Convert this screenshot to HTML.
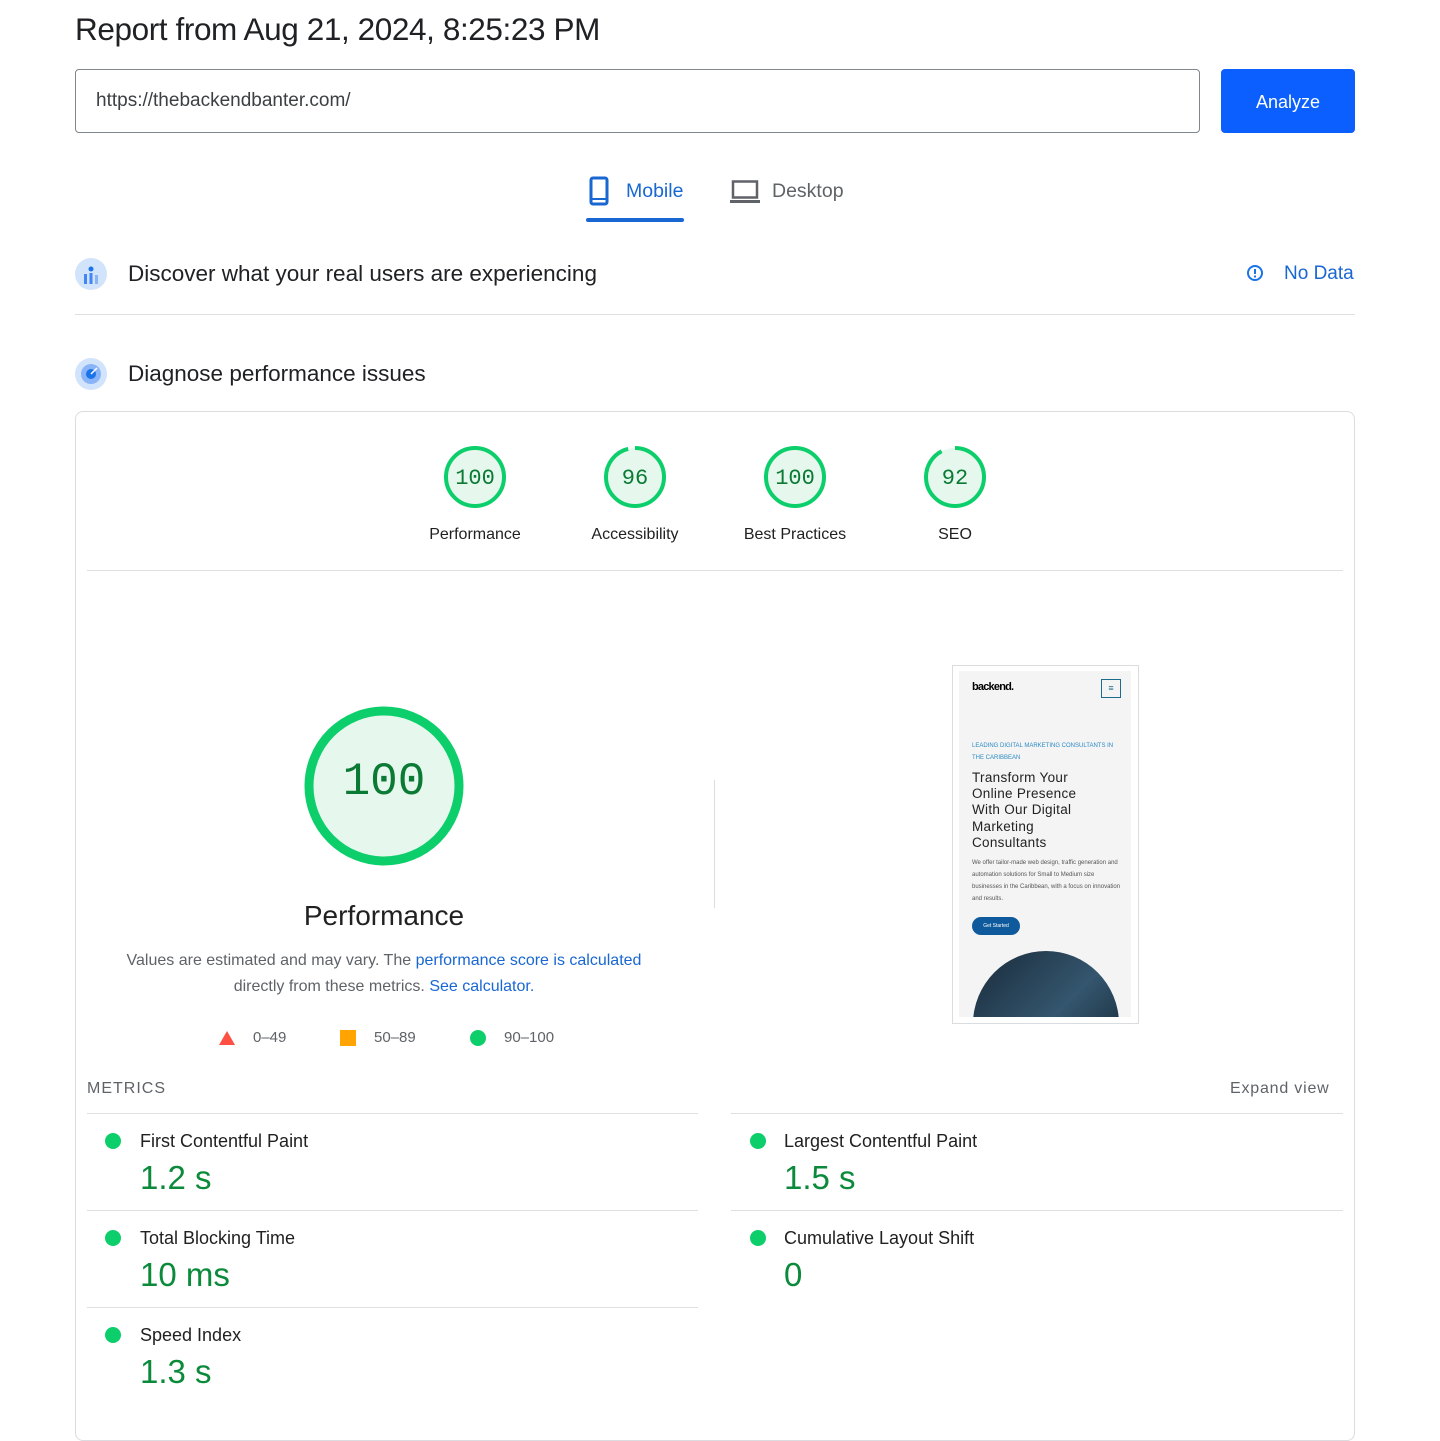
<!DOCTYPE html>
<html><head><meta charset="utf-8"><style>
*{box-sizing:border-box;margin:0;padding:0}
body{width:1440px;height:1412px;background:#fff;font-family:"Liberation Sans",Arial,sans-serif;color:#202124;position:relative;overflow:hidden}
.a{position:absolute}
.gauge{position:absolute;width:64px;height:64px}
.lbl{position:absolute;font-size:16px;color:#212121;text-align:center;width:160px}
.mono{font-family:"Liberation Mono","DejaVu Sans Mono",monospace}
.dot{position:absolute;width:16px;height:16px;border-radius:50%;background:#0cce6b}
.mname{position:absolute;font-size:18px;color:#212121}
.mval{position:absolute;font-size:33px;color:#0a8a3a}
.hr{position:absolute;height:1px;background:#e0e0e0}
</style></head><body>
<div class="a" style="left:75px;top:11px;font-size:31.5px;color:#202124;letter-spacing:-0.4px">Report from Aug 21, 2024, 8:25:23 PM</div>
<div class="a" style="left:75px;top:69px;width:1125px;height:64px;border:1px solid #80868b;border-radius:4px;font-size:19px;padding:20px 20px;color:#3c4043">https://thebackendbanter.com/</div>
<div class="a" style="left:1221px;top:69px;width:134px;height:64px;background:#0b5fff;border-radius:4px;color:#fff;font-size:18px;text-align:center;line-height:66px">Analyze</div>

<svg class="a" style="left:589px;top:176px" width="20" height="30" viewBox="0 0 20 30"><rect x="2" y="2" width="16" height="26" rx="2" fill="none" stroke="#1967d2" stroke-width="3"/><line x1="2" y1="23" x2="18" y2="23" stroke="#1967d2" stroke-width="2"/></svg>
<div class="a" style="left:626px;top:180px;font-size:19.5px;color:#1967d2">Mobile</div>
<div class="a" style="left:586px;top:218px;width:98px;height:4px;background:#1967d2;border-radius:2px"></div>
<svg class="a" style="left:730px;top:180px" width="30" height="24" viewBox="0 0 30 24"><rect x="3" y="1.5" width="24" height="16" fill="none" stroke="#5f6368" stroke-width="2.5"/><rect x="0" y="20" width="30" height="3" fill="#5f6368"/></svg>
<div class="a" style="left:772px;top:180px;font-size:19.5px;color:#5f6368">Desktop</div>

<svg class="a" style="left:75px;top:257px" width="32" height="34"><circle cx="16" cy="17" r="16" fill="#d2e3fc"/><circle cx="16" cy="12" r="2.5" fill="#1a73e8"/><rect x="9" y="17" width="3" height="10" fill="#4285f4"/><rect x="14.5" y="16" width="3" height="11" fill="#4285f4"/><rect x="20" y="18" width="3" height="9" fill="#8ab4f8"/></svg>
<div class="a" style="left:128px;top:261px;font-size:22.5px;color:#202124">Discover what your real users are experiencing</div>
<svg class="a" style="left:1246px;top:264px" width="18" height="18"><circle cx="9" cy="9" r="7" fill="none" stroke="#1a73e8" stroke-width="2"/><rect x="8" y="5" width="2" height="5" fill="#1a73e8"/><rect x="8" y="11.5" width="2" height="2" fill="#1a73e8"/></svg>
<div class="a" style="left:1284px;top:263px;font-size:19px;color:#1967d2">No Data</div>
<div class="hr" style="left:75px;top:314px;width:1280px"></div>

<svg class="a" style="left:75px;top:357px" width="32" height="34"><circle cx="16" cy="17" r="16" fill="#d2e3fc"/><circle cx="16" cy="17" r="10" fill="#8ab4f8"/><circle cx="16" cy="17" r="5" fill="#1a73e8"/><line x1="16" y1="17" x2="22" y2="11" stroke="#fff" stroke-width="1.5"/></svg>
<div class="a" style="left:128px;top:361px;font-size:22.5px;color:#202124">Diagnose performance issues</div>

<div class="a" style="left:75px;top:411px;width:1280px;height:1030px;border:1px solid #dadce0;border-radius:8px"></div>

<div class="gauge" style="left:443px;top:445px"><svg width="64" height="64"><circle cx="32" cy="32" r="29" fill="#e6f8ed" stroke="#0cce6b" stroke-width="4"/></svg></div>
<div class="a mono" style="left:443px;top:466px;width:64px;text-align:center;font-size:22px;color:#0a7a35">100</div>
<div class="lbl" style="left:395px;top:526px">Performance</div>
<div class="gauge" style="left:603px;top:445px"><svg width="64" height="64"><circle cx="32" cy="32" r="29" fill="#e6f8ed"/><circle cx="32" cy="32" r="29" fill="none" stroke="#0cce6b" stroke-width="4" stroke-dasharray="175 182" transform="rotate(-90 32 32)"/></svg></div>
<div class="a mono" style="left:603px;top:466px;width:64px;text-align:center;font-size:22px;color:#0a7a35">96</div>
<div class="lbl" style="left:555px;top:526px">Accessibility</div>
<div class="gauge" style="left:763px;top:445px"><svg width="64" height="64"><circle cx="32" cy="32" r="29" fill="#e6f8ed" stroke="#0cce6b" stroke-width="4"/></svg></div>
<div class="a mono" style="left:763px;top:466px;width:64px;text-align:center;font-size:22px;color:#0a7a35">100</div>
<div class="lbl" style="left:715px;top:526px">Best Practices</div>
<div class="gauge" style="left:923px;top:445px"><svg width="64" height="64"><circle cx="32" cy="32" r="29" fill="#e6f8ed"/><circle cx="32" cy="32" r="29" fill="none" stroke="#0cce6b" stroke-width="4" stroke-dasharray="168 182" transform="rotate(-90 32 32)"/></svg></div>
<div class="a mono" style="left:923px;top:466px;width:64px;text-align:center;font-size:22px;color:#0a7a35">92</div>
<div class="lbl" style="left:875px;top:526px">SEO</div>
<div class="hr" style="left:87px;top:570px;width:1256px"></div>

<svg class="a" style="left:303px;top:705px" width="162" height="162"><circle cx="81" cy="81" r="75" fill="#e6f8ed" stroke="#0cce6b" stroke-width="9"/></svg>
<div class="a mono" style="left:303px;top:756px;width:162px;text-align:center;font-size:46px;color:#0a7a35">100</div>
<div class="a" style="left:184px;top:900px;width:400px;text-align:center;font-size:28px;color:#212121">Performance</div>
<div class="a" style="left:100px;top:948px;width:568px;text-align:center;font-size:16px;line-height:26px;color:#5f6368">Values are estimated and may vary. The <span style="color:#1967d2">performance score is calculated</span> directly from these metrics. <span style="color:#1967d2">See calculator.</span></div>
<svg class="a" style="left:218px;top:1030px" width="18" height="16"><polygon points="9,1 17,15 1,15" fill="#ff4e42"/></svg>
<div class="a" style="left:253px;top:1029px;font-size:15px;color:#5f6368">0–49</div>
<div class="a" style="left:340px;top:1030px;width:16px;height:16px;background:#ffa400"></div>
<div class="a" style="left:374px;top:1029px;font-size:15px;color:#5f6368">50–89</div>
<div class="dot" style="left:470px;top:1030px"></div>
<div class="a" style="left:504px;top:1029px;font-size:15px;color:#5f6368">90–100</div>

<div class="a" style="left:714px;top:780px;width:1px;height:128px;background:#dadce0"></div>

<div class="a" style="left:952px;top:665px;width:187px;height:359px;border:1px solid #dadce0;background:#fff"></div>
<div class="a" style="left:959px;top:671px;width:172px;height:346px;background:#f4f4f5;overflow:hidden">
 <div class="a" style="left:13px;top:10px;font-size:11px;font-weight:bold;letter-spacing:-0.8px;color:#000">backend.</div>
 <div class="a" style="left:142px;top:8px;width:20px;height:19px;border:1px solid #1c6b8c;font-size:9px;text-align:center;color:#1c6b8c;line-height:17px">≡</div>
 <div class="a" style="left:13px;top:69px;width:150px;font-size:6px;line-height:12px;color:#2b8ac4">LEADING DIGITAL MARKETING CONSULTANTS IN THE CARIBBEAN</div>
 <div class="a" style="left:13px;top:99px;width:118px;font-size:13.5px;line-height:16.2px;letter-spacing:0.3px;color:#222">Transform Your Online Presence With Our Digital Marketing Consultants</div>
 <div class="a" style="left:13px;top:186px;width:150px;font-size:6px;line-height:12px;color:#555">We offer tailor-made web design, traffic generation and automation solutions for Small to Medium size businesses in the Caribbean, with a focus on innovation and results.</div>
 <div class="a" style="left:13px;top:246px;width:48px;height:18px;border-radius:9px;background:#0f5a9c;color:#fff;font-size:5px;text-align:center;line-height:18px">Get Started</div>
 <div class="a" style="left:14px;top:280px;width:146px;height:146px;border-radius:50%;background:linear-gradient(135deg,#1a2a3a,#34566e 50%,#0d1a26)"></div>
</div>

<div class="a" style="left:87px;top:1080px;font-size:16px;letter-spacing:1px;color:#5f6368">METRICS</div>
<div class="a" style="left:1230px;top:1080px;font-size:16px;letter-spacing:0.8px;color:#5f6368">Expand view</div>

<div class="hr" style="left:87px;top:1113px;width:611px"></div>
<div class="hr" style="left:731px;top:1113px;width:612px"></div>
<div class="dot" style="left:105px;top:1133px"></div><div class="mname" style="left:140px;top:1131px">First Contentful Paint</div><div class="mval" style="left:140px;top:1159px">1.2 s</div>
<div class="dot" style="left:750px;top:1133px"></div><div class="mname" style="left:784px;top:1131px">Largest Contentful Paint</div><div class="mval" style="left:784px;top:1159px">1.5 s</div>
<div class="hr" style="left:87px;top:1210px;width:611px"></div>
<div class="hr" style="left:731px;top:1210px;width:612px"></div>
<div class="dot" style="left:105px;top:1230px"></div><div class="mname" style="left:140px;top:1228px">Total Blocking Time</div><div class="mval" style="left:140px;top:1256px">10 ms</div>
<div class="dot" style="left:750px;top:1230px"></div><div class="mname" style="left:784px;top:1228px">Cumulative Layout Shift</div><div class="mval" style="left:784px;top:1256px">0</div>
<div class="hr" style="left:87px;top:1307px;width:611px"></div>
<div class="dot" style="left:105px;top:1327px"></div><div class="mname" style="left:140px;top:1325px">Speed Index</div><div class="mval" style="left:140px;top:1353px">1.3 s</div>
</body></html>
